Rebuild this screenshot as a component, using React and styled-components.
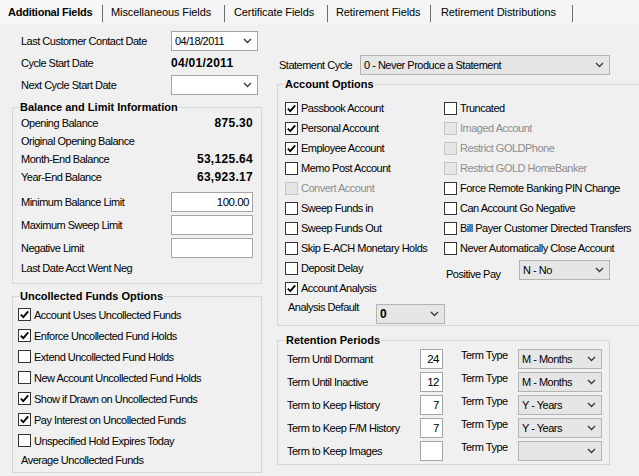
import React from "react";
import styled, { createGlobalStyle } from "styled-components";

const GlobalStyle = createGlobalStyle`
  html, body {
    margin: 0;
    padding: 0;
    background: #f0f0f0;
    overflow: hidden;
  }
  body {
    font-family: "Liberation Sans", Arial, sans-serif;
    font-size: 11px;
    line-height: 14px;
    letter-spacing: -0.5px;
    color: #000;
  }
`;

const Window = styled.div`
  width: 639px;
  height: 476px;
  overflow: hidden;
  background: #f0f0f0;
`;

const TabStrip = styled.div`
  display: flex;
  height: 24px;
  background: #f5f5f5;
`;

const Tab = styled.div`
  position: relative;
  box-sizing: border-box;
  width: ${(p) => p.$w}px;
  padding-left: ${(p) => p.$pad}px;
  display: flex;
  align-items: center;
  white-space: nowrap;
  font-weight: ${(p) => (p.$active ? 700 : 400)};
  letter-spacing: ${(p) => (p.$active ? "-0.25px" : "-0.1px")};
  background: ${(p) => (p.$active ? "#f7f7f7" : "transparent")};

  &::after {
    content: "";
    position: absolute;
    right: 0;
    top: 5px;
    height: 17px;
    width: 1px;
    background: #6e6e6e;
  }
`;

const Panel = styled.div`
  display: flex;
  gap: 15px;
  padding: 6px 0 0 12px;
`;

const LeftCol = styled.div`
  width: 250px;
  flex-shrink: 0;
`;

const RightCol = styled.div`
  width: 362px;
  flex-shrink: 0;
`;

const FieldRow = styled.div`
  display: flex;
  align-items: center;
  height: 22px;
`;

const FieldLabel = styled.div`
  box-sizing: border-box;
  width: ${(p) => p.$w}px;
  flex-shrink: 0;
  padding-left: ${(p) => p.$indent || 0}px;
  white-space: nowrap;
`;

const BoldValue = styled.span`
  font-weight: 700;
  font-size: 12px;
  letter-spacing: 0.3px;
`;

const Combo = styled.div`
  box-sizing: border-box;
  width: ${(p) => p.$w}px;
  height: 20px;
  flex-shrink: 0;
  display: flex;
  align-items: center;
  justify-content: space-between;
  padding: 0 5px 0 3px;
  border: 1px solid ${(p) => (p.$white ? "#a3a3a3" : "#b3b3b3")};
  background: ${(p) => (p.$white ? "#fff" : "#e6e6e6")};
  font-weight: ${(p) => (p.$bold ? 700 : 400)};
  font-size: ${(p) => (p.$bold ? "12px" : "11px")};
  white-space: nowrap;
`;

const Chevron = () => (
  <svg width="9" height="6" viewBox="0 0 9 6">
    <polyline
      points="1,1 4.5,4.5 8,1"
      fill="none"
      stroke="#3c3c3c"
      strokeWidth="1.4"
    />
  </svg>
);

const Select = ({ w, white, bold, value }) => (
  <Combo $w={w} $white={white} $bold={bold}>
    <span>{value}</span>
    <Chevron />
  </Combo>
);

const TextBox = styled.div`
  box-sizing: border-box;
  width: ${(p) => p.$w}px;
  height: 20px;
  flex-shrink: 0;
  border: 1px solid #a5a5a5;
  background: #fff;
  text-align: right;
  padding-right: 3px;
  line-height: 18px;
  font-size: 11.5px;
`;

const Group = styled.fieldset`
  box-sizing: border-box;
  min-width: 0;
  width: ${(p) => p.$w}px;
  margin: ${(p) => p.$mt}px 0 0 0;
  padding: ${(p) => p.$pad};
  border: 1px solid #d6d6d6;
`;

const Legend = styled.legend`
  padding: 0 1px;
  margin-left: ${(p) => p.$lm}px;
  font-weight: 700;
  line-height: 14px;
  letter-spacing: 0;
`;

const DataRow = styled.div`
  display: flex;
  align-items: center;
  justify-content: space-between;
  height: ${(p) => p.$h || 18}px;
  margin-top: ${(p) => p.$mt || 0}px;
  white-space: nowrap;
`;

const CheckRow = styled.div`
  display: flex;
  align-items: center;
  gap: 3px;
  height: ${(p) => p.$h}px;
  white-space: nowrap;
  color: ${(p) => (p.$disabled ? "#8d8d8d" : "#000")};
`;

const Box = styled.span`
  box-sizing: border-box;
  width: 13px;
  height: 13px;
  flex-shrink: 0;
  display: flex;
  align-items: center;
  justify-content: center;
  border: 1px solid ${(p) => (p.$disabled ? "#c6c6c6" : "#333")};
  background: ${(p) => (p.$disabled ? "#e6e6e6" : "#fff")};
`;

const Check = ({ label, checked, disabled, h }) => (
  <CheckRow $h={h} $disabled={disabled}>
    <Box $disabled={disabled}>
      {checked && (
        <svg width="11" height="11" viewBox="0 0 11 11">
          <path
            d="M1.8 5.6 L4.3 8.2 L9.2 2.4"
            fill="none"
            stroke="#000"
            strokeWidth="1.8"
          />
        </svg>
      )}
    </Box>
    <span>{label}</span>
  </CheckRow>
);

const StatementRow = styled.div`
  display: flex;
  align-items: center;
  height: 22px;
  margin-top: 24px;
`;

const Columns = styled.div`
  display: flex;
`;

const OptCol = styled.div`
  width: ${(p) => (p.$w ? `${p.$w}px` : "auto")};
  flex: ${(p) => (p.$w ? "0 0 auto" : "1")};
`;

const InlineRow = styled.div`
  display: flex;
  align-items: flex-start;
  height: ${(p) => p.$h}px;
`;

const InlineLabel = styled.div`
  box-sizing: border-box;
  width: ${(p) => p.$w}px;
  flex-shrink: 0;
  padding-left: ${(p) => p.$indent}px;
  margin-top: ${(p) => p.$top}px;
  white-space: nowrap;
`;

const Shift = styled.div`
  margin-top: ${(p) => p.$top}px;
`;

const RetRow = styled.div`
  display: flex;
  align-items: center;
  height: 23px;
  white-space: nowrap;
`;

const TermType = styled.div`
  align-self: flex-start;
  margin: 1px 0 0 18px;
  width: 57px;
  flex-shrink: 0;
`;

const leftChecks = [
  ["Account Uses Uncollected Funds", true],
  ["Enforce Uncollected Fund Holds", true],
  ["Extend Uncollected Fund Holds", false],
  ["New Account Uncollected Fund Holds", false],
  ["Show if Drawn on Uncollected Funds", true],
  ["Pay Interest on Uncollected Funds", true],
  ["Unspecified Hold Expires Today", false],
];

const optionsA = [
  ["Passbook Account", true],
  ["Personal Account", true],
  ["Employee Account", true],
  ["Memo Post Account", false],
  ["Convert Account", false, true],
  ["Sweep Funds in", false],
  ["Sweep Funds Out", false],
  ["Skip E-ACH Monetary Holds", false],
  ["Deposit Delay", false],
  ["Account Analysis", true],
];

const optionsB = [
  ["Truncated", false],
  ["Imaged Account", false, true],
  ["Restrict GOLDPhone", false, true],
  ["Restrict GOLD HomeBanker", false, true],
  ["Force Remote Banking PIN Change", false],
  ["Can Account Go Negative", false],
  ["Bill Payer Customer Directed Transfers", false],
  ["Never Automatically Close Account", false],
];

const retention = [
  ["Term Until Dormant", "24", "M - Months"],
  ["Term Until Inactive", "12", "M - Months"],
  ["Term to Keep History", "7", "Y - Years"],
  ["Term to Keep F/M History", "7", "Y - Years"],
  ["Term to Keep Images", "", ""],
];

const tabs = [
  ["Additional Fields", 103, 8],
  ["Miscellaneous Fields", 122, 8],
  ["Certificate Fields", 103, 9],
  ["Retirement Fields", 103, 8],
  ["Retirement Distributions", 142, 10],
];

export default function App() {
  return (
    <Window>
      <GlobalStyle />
      <TabStrip>
        {tabs.map(([t, w, pad], i) => (
          <Tab key={t} $w={w} $pad={pad} $active={i === 0}>
            {t}
          </Tab>
        ))}
      </TabStrip>
      <Panel>
        <LeftCol>
          <FieldRow>
            <FieldLabel $w={159} $indent={9}>
              Last Customer Contact Date
            </FieldLabel>
            <Select w={87} white value="04/18/2011" />
          </FieldRow>
          <FieldRow>
            <FieldLabel $w={159} $indent={9}>
              Cycle Start Date
            </FieldLabel>
            <BoldValue>04/01/2011</BoldValue>
          </FieldRow>
          <FieldRow>
            <FieldLabel $w={159} $indent={9}>
              Next Cycle Start Date
            </FieldLabel>
            <Select w={87} white value="" />
          </FieldRow>

          <Group $w={250} $mt={4} $pad="0 8px 6px 8px">
            <Legend $lm={-2}>Balance and Limit Information</Legend>
            <DataRow>
              <span>Opening Balance</span>
              <BoldValue>875.30</BoldValue>
            </DataRow>
            <DataRow>
              <span>Original Opening Balance</span>
            </DataRow>
            <DataRow>
              <span>Month-End Balance</span>
              <BoldValue>53,125.64</BoldValue>
            </DataRow>
            <DataRow>
              <span>Year-End Balance</span>
              <BoldValue>63,923.17</BoldValue>
            </DataRow>
            <DataRow $h={23} $mt={4}>
              <span>Minimum Balance Limit</span>
              <TextBox $w={82}>100.00</TextBox>
            </DataRow>
            <DataRow $h={23}>
              <span>Maximum Sweep Limit</span>
              <TextBox $w={82} />
            </DataRow>
            <DataRow $h={23}>
              <span>Negative Limit</span>
              <TextBox $w={82} />
            </DataRow>
            <DataRow>
              <span>Last Date Acct Went Neg</span>
            </DataRow>
          </Group>

          <Group $w={250} $mt={5} $pad="1px 8px 3px 5px">
            <Legend $lm={1}>Uncollected Funds Options</Legend>
            {leftChecks.map(([label, checked]) => (
              <Check key={label} label={label} checked={checked} h={21} />
            ))}
            <DataRow>
              <FieldLabel $w={200} $indent={3}>
                Average Uncollected Funds
              </FieldLabel>
            </DataRow>
          </Group>
        </LeftCol>

        <RightCol>
          <StatementRow>
            <FieldLabel $w={83} $indent={2}>
              Statement Cycle
            </FieldLabel>
            <Select w={250} value="0 - Never Produce a Statement" />
          </StatementRow>

          <Group $w={370} $mt={1} $pad="7px 0 0 7px">
            <Legend $lm={-1}>Account Options</Legend>
            <Columns>
              <OptCol $w={159}>
                {optionsA.map(([label, checked, disabled]) => (
                  <Check
                    key={label}
                    label={label}
                    checked={checked}
                    disabled={disabled}
                    h={20}
                  />
                ))}
                <InlineRow $h={27}>
                  <InlineLabel $w={91} $indent={3} $top={2}>
                    Analysis Default
                  </InlineLabel>
                  <Shift $top={6}>
                    <Select w={69} bold value="0" />
                  </Shift>
                </InlineRow>
              </OptCol>
              <OptCol>
                {optionsB.map(([label, checked, disabled]) => (
                  <Check
                    key={label}
                    label={label}
                    checked={checked}
                    disabled={disabled}
                    h={20}
                  />
                ))}
                <InlineRow $h={24}>
                  <InlineLabel $w={75} $indent={2} $top={9}>
                    Positive Pay
                  </InlineLabel>
                  <Shift $top={2}>
                    <Select w={91} value="N - No" />
                  </Shift>
                </InlineRow>
              </OptCol>
            </Columns>
          </Group>

          <Group $w={333} $mt={7} $pad="0 0 2px 9px">
            <Legend $lm={-2}>Retention Periods</Legend>
            {retention.map(([label, num, type]) => (
              <RetRow key={label}>
                <FieldLabel $w={133}>{label}</FieldLabel>
                <TextBox $w={23}>{num}</TextBox>
                <TermType>Term Type</TermType>
                <Select w={84} value={type} />
              </RetRow>
            ))}
          </Group>
        </RightCol>
      </Panel>
    </Window>
  );
}
